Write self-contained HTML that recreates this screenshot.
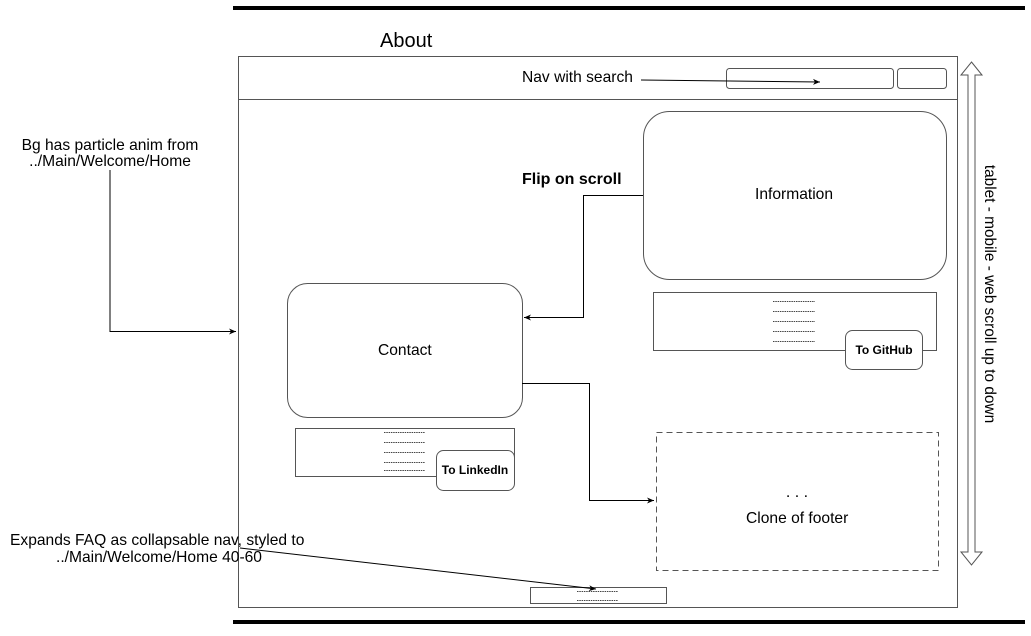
<!DOCTYPE html>
<html><head><meta charset="utf-8"><style>
html,body{margin:0;padding:0;background:#fff;}
svg{display:block;font-family:"Liberation Sans",Arial,sans-serif;}
</style></head><body>
<svg width="1031" height="636" viewBox="0 0 1031 636" xmlns="http://www.w3.org/2000/svg">
<defs>
<marker id="a" markerWidth="8" markerHeight="8" refX="7" refY="4" orient="auto" markerUnits="userSpaceOnUse">
<path d="M0,1 L7,4 L0,7 L2,4 z" fill="#000"/></marker>
</defs>
<rect x="233" y="6" width="792" height="4" fill="#000"/>
<rect x="233" y="620" width="792" height="4" fill="#000"/>
<text x="380" y="47" font-size="20">About</text>
<g fill="none" stroke="#555" stroke-width="1">
<rect x="238.5" y="56.5" width="719" height="551"/>
<line x1="238" y1="99.5" x2="957" y2="99.5"/>
<rect x="726.5" y="68.5" width="167" height="20" rx="3"/>
<rect x="897.5" y="68.5" width="49" height="20" rx="3"/>
<rect x="643.5" y="111.5" width="303" height="168" rx="26"/>
<rect x="653.5" y="292.5" width="283" height="58"/>
<rect x="287.5" y="283.5" width="235" height="134" rx="20"/>
<rect x="295.5" y="428.5" width="219" height="48"/>
<rect x="530.5" y="587.5" width="136" height="16"/>
<rect x="656.5" y="432.5" width="282" height="138" stroke-dasharray="6,4"/>
</g>
<rect x="845.5" y="330.5" width="77" height="39" rx="7" fill="#fff" stroke="#555"/>
<rect x="436.5" y="450.5" width="78" height="40" rx="7" fill="#fff" stroke="#555"/>
<g stroke="#444" stroke-width="1" stroke-dasharray="1.5,0.8">
<line x1="773" y1="301.5" x2="815" y2="301.5"/><line x1="773" y1="311.5" x2="815" y2="311.5"/>
<line x1="773" y1="321.5" x2="815" y2="321.5"/><line x1="773" y1="331.5" x2="815" y2="331.5"/>
<line x1="773" y1="341.5" x2="815" y2="341.5"/>
<line x1="384" y1="432.5" x2="425" y2="432.5"/><line x1="384" y1="442.5" x2="425" y2="442.5"/>
<line x1="384" y1="452.5" x2="425" y2="452.5"/><line x1="384" y1="462.5" x2="425" y2="462.5"/>
<line x1="384" y1="470.5" x2="425" y2="470.5"/>
<line x1="577" y1="591.5" x2="618" y2="591.5"/><line x1="577" y1="600.5" x2="618" y2="600.5"/>
</g>
<g font-size="15.6" fill="#000">
<text x="522" y="82">Nav with search</text>
<text x="755" y="199">Information</text>
<text x="378" y="355">Contact</text>
<text x="746" y="523">Clone of footer</text>
<text x="797" y="497" text-anchor="middle" font-size="16">. . .</text>
<text x="110" y="150" text-anchor="middle">Bg has particle anim from</text>
<text x="110" y="166" text-anchor="middle">../Main/Welcome/Home</text>
<text x="10" y="545">Expands FAQ as collapsable nav, styled to</text>
<text x="159" y="562" text-anchor="middle">../Main/Welcome/Home 40-60</text>
<text x="522" y="184" font-weight="bold" font-size="16">Flip on scroll</text>
</g>
<g font-size="12" font-weight="bold">
<text x="884" y="354" text-anchor="middle">To GitHub</text>
<text x="475" y="474" text-anchor="middle">To LinkedIn</text>
</g>
<text transform="translate(985,294) rotate(90)" font-size="15.4" text-anchor="middle">tablet - mobile - web scroll up to down</text>
<g fill="none" stroke="#000" stroke-width="1">
<line x1="641" y1="80" x2="820" y2="82" marker-end="url(#a)"/>
<polyline points="110,170 110,331.5 236,331.5" marker-end="url(#a)"/>
<polyline points="643,195.5 583.5,195.5 583.5,317.5 524,317.5" marker-end="url(#a)"/>
<polyline points="522,383.5 589.5,383.5 589.5,500.5 654,500.5" marker-end="url(#a)"/>
<line x1="240" y1="548" x2="596" y2="589" marker-end="url(#a)"/>
</g>
<path d="M971.5,62 L982,75 L975,75 L975,552 L982,552 L971.5,565 L961,552 L968,552 L968,75 L961,75 Z" fill="#fff" stroke="#555" stroke-width="1"/>
</svg>
</body></html>
